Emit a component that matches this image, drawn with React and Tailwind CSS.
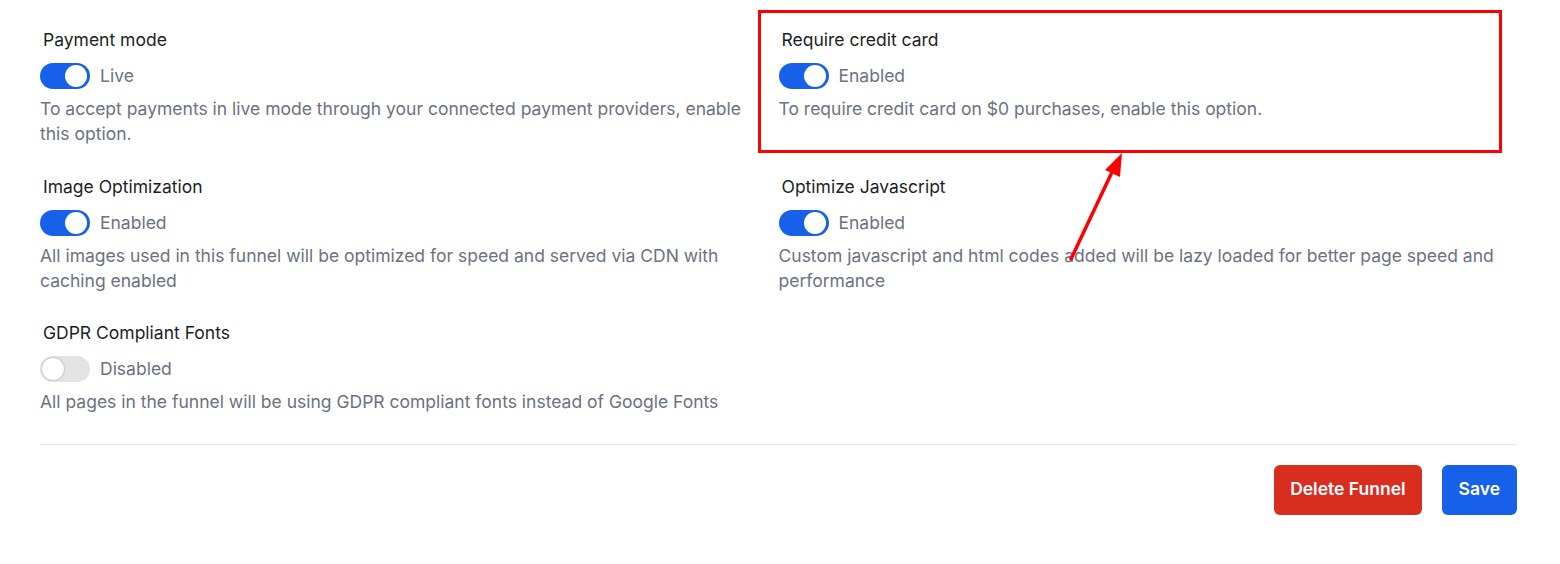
import React from "react";

const settings = [
  {
    title: "Payment mode",
    on: true,
    label: "Live",
    desc: "To accept payments in live mode through your connected payment providers, enable this option.",
  },
  {
    title: "Require credit card",
    on: true,
    label: "Enabled",
    desc: "To require credit card on $0 purchases, enable this option.",
  },
  {
    title: "Image Optimization",
    on: true,
    label: "Enabled",
    desc: "All images used in this funnel will be optimized for speed and served via CDN with caching enabled",
  },
  {
    title: "Optimize Javascript",
    on: true,
    label: "Enabled",
    desc: "Custom javascript and html codes added will be lazy loaded for better page speed and performance",
  },
  {
    title: "GDPR Compliant Fonts",
    on: false,
    label: "Disabled",
    desc: "All pages in the funnel will be using GDPR compliant fonts instead of Google Fonts",
  },
];

const Toggle = ({ on }) => (
  <div
    className={
      on
        ? "relative w-[50px] h-[26px] rounded-full bg-[#1761ea] shrink-0"
        : "relative w-[50px] h-[26px] rounded-full bg-[#e3e3e3] shrink-0"
    }
  >
    <div
      className={
        on
          ? "absolute top-[2px] right-[3px] w-[22px] h-[22px] rounded-full bg-white"
          : "absolute top-[2px] left-[2px] w-[22px] h-[22px] rounded-full bg-white shadow-[0_0_2px_rgba(0,0,0,0.35)]"
      }
    ></div>
  </div>
);

const Setting = ({ item }) => (
  <div className="pr-[14px] pb-[28.5px]">
    <p className="ml-[3px] text-[17.5px] leading-6 text-[#1b1f24]">{item.title}</p>
    <div className="flex items-center gap-[10px] mt-[11px] mb-[7px]">
      <Toggle on={item.on} />
      <span className="text-[17.5px] leading-6 text-[#6b7280]">{item.label}</span>
    </div>
    <p className="text-[17.5px] leading-[25px] text-[#6b7280]">{item.desc}</p>
  </div>
);

export default function App() {
  return (
    <div
      className="relative w-[1560px] h-[564px] bg-white pl-10 pr-[43px] pt-7"
      style={{ fontFamily: "Inter, 'Noto Sans', sans-serif" }}
    >
      <div className="grid grid-cols-2">
        {settings.map((s) => (
          <Setting key={s.title} item={s} />
        ))}
      </div>

      {/* divider + actions */}
      <div className="mt-px border-t border-[#e8e8ea] pt-5 flex justify-end gap-5">
        <button className="h-[50px] px-[16px] rounded-md bg-[#d92d20] text-white font-semibold text-[17.5px]">
          Delete Funnel
        </button>
        <button className="h-[50px] px-[17px] rounded-md bg-[#1761ea] text-white font-semibold text-[17.5px]">
          Save
        </button>
      </div>

      {/* annotation box */}
      <div className="absolute left-[758px] top-[10px] w-[744px] h-[143px] border-[3px] border-[#ff0000] pointer-events-none"></div>

      {/* annotation arrow */}
      <svg
        className="absolute left-0 top-0 pointer-events-none"
        width="1560"
        height="564"
        viewBox="0 0 1560 564"
      >
        <line x1="1071" y1="259" x2="1113" y2="170" stroke="#ff0000" strokeWidth="3.5" strokeLinecap="round" />
        <polygon points="1122,153 1105,170 1120,177" fill="#ff0000" />
      </svg>
    </div>
  );
}
